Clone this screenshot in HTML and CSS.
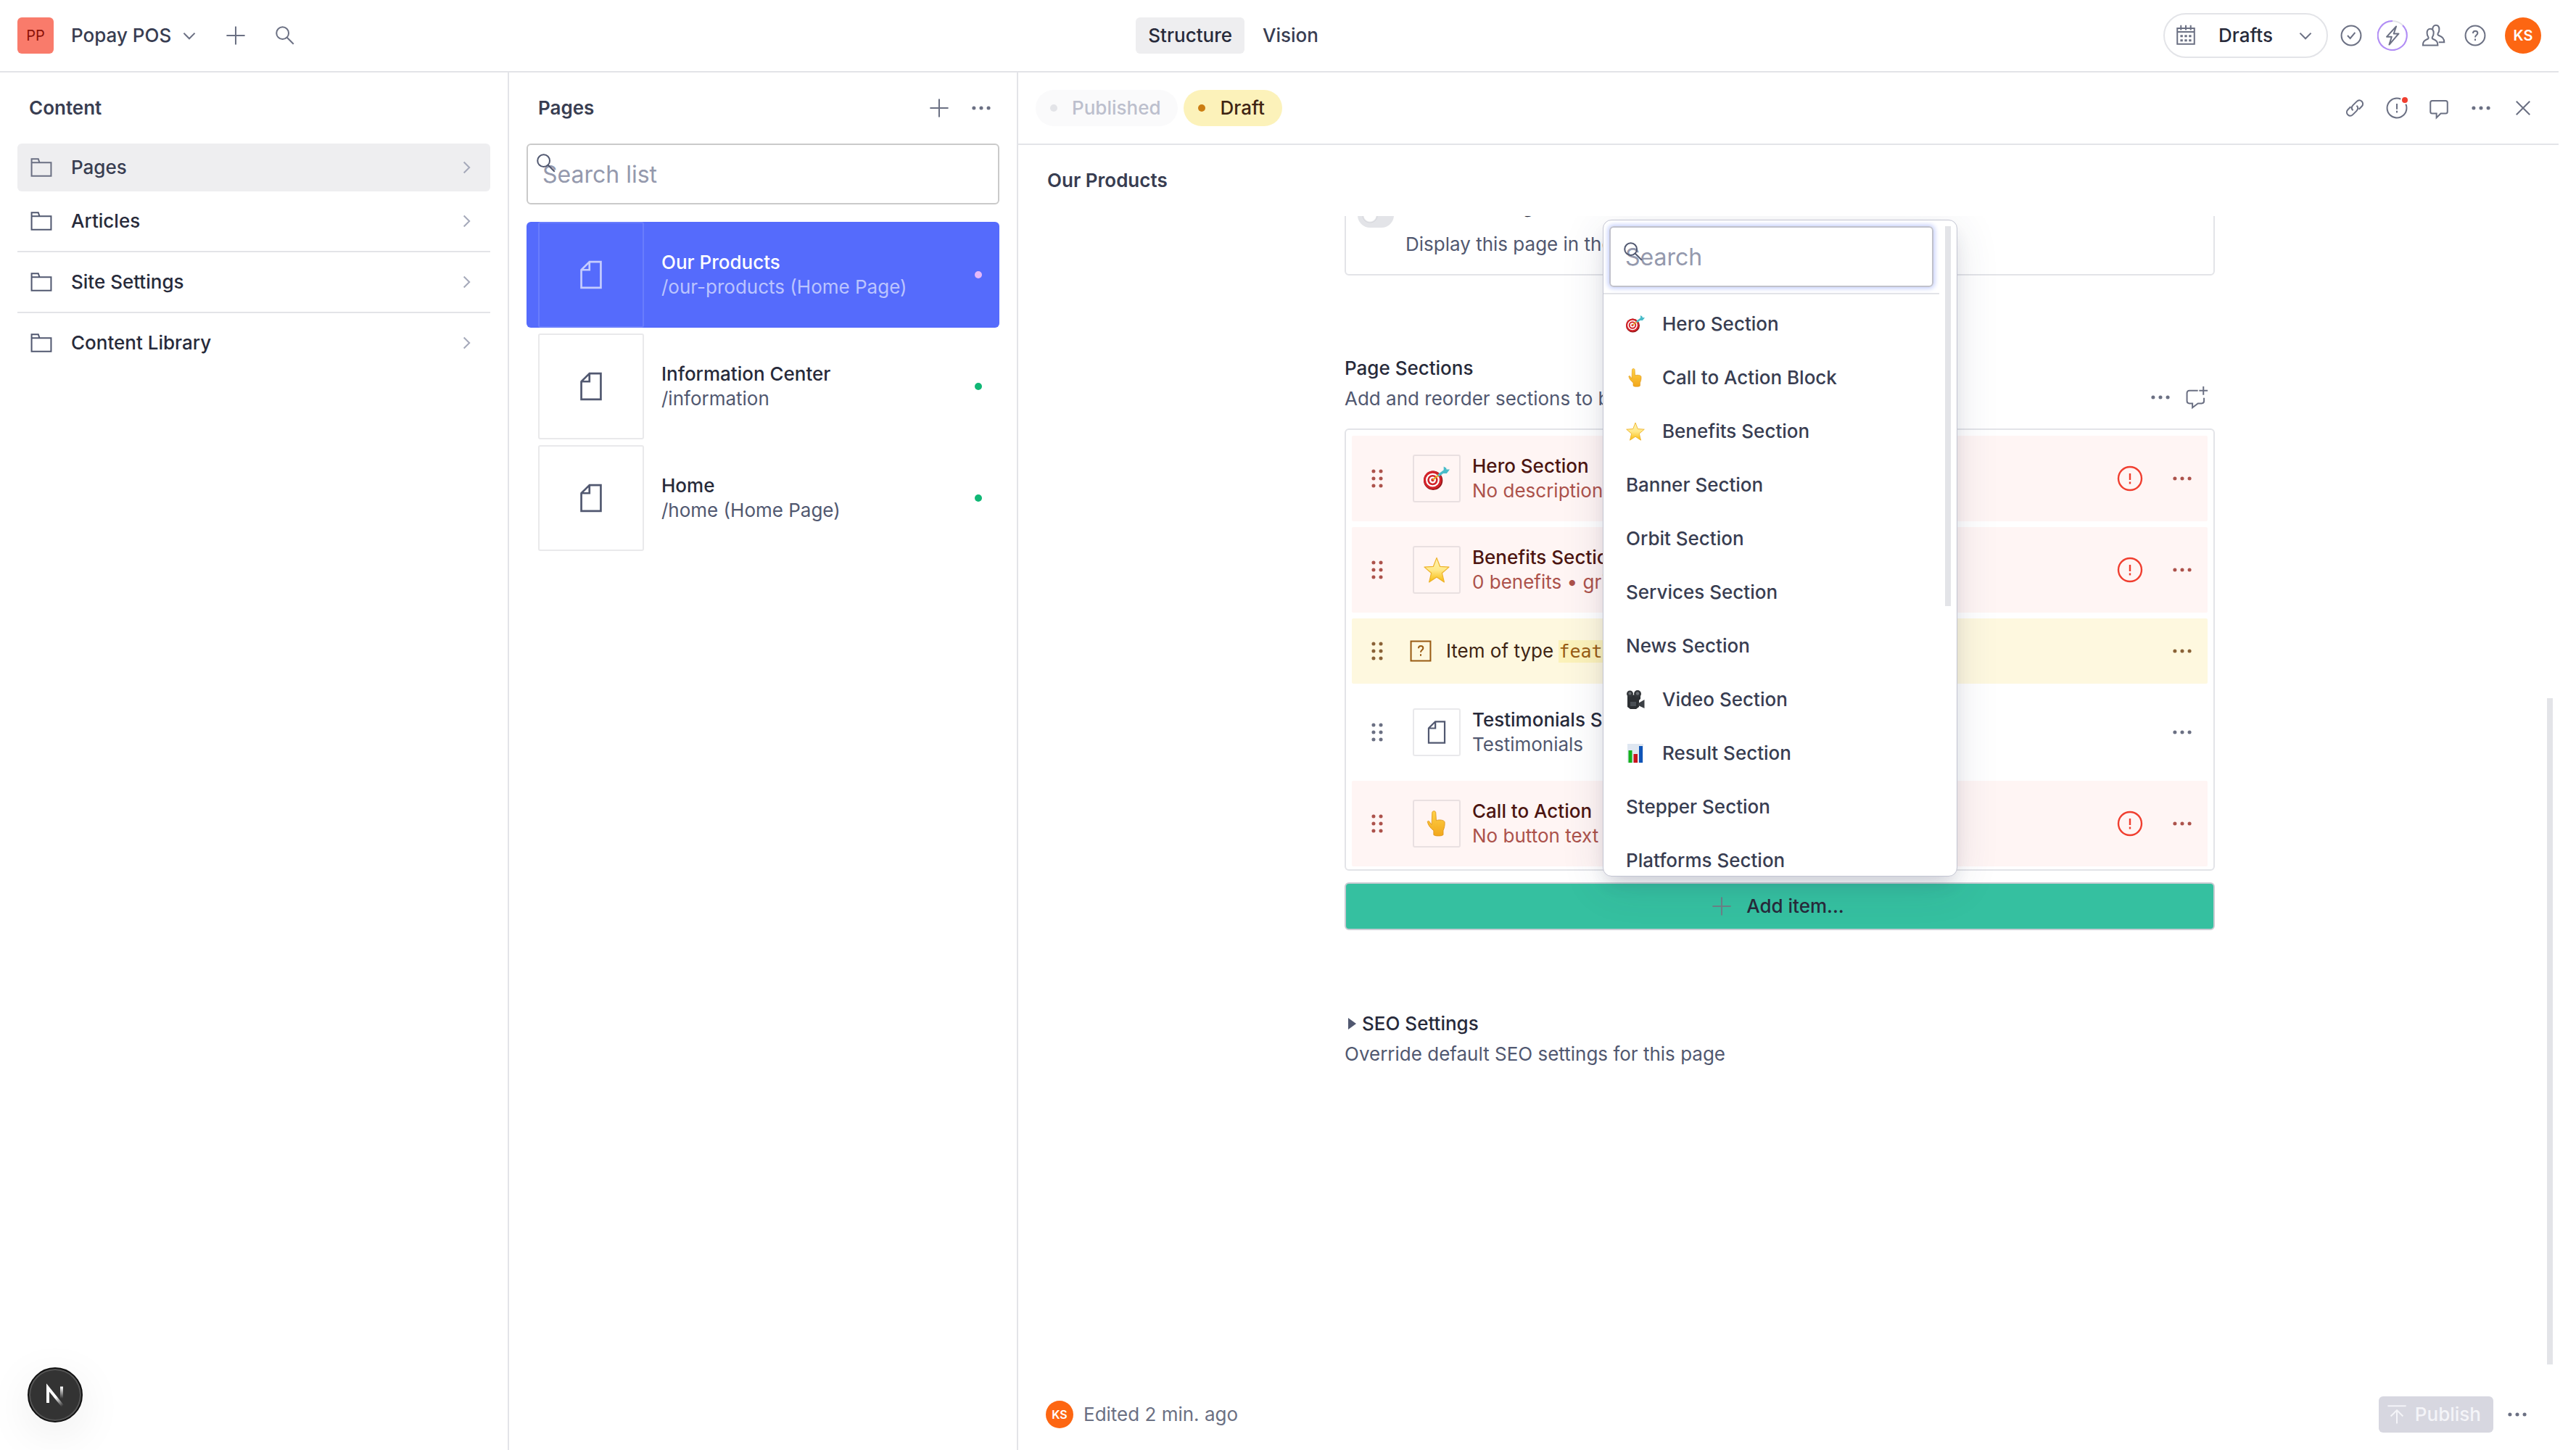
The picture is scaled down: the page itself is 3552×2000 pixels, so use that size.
FILE: index.html
```html
<!DOCTYPE html>
<html lang="en">
  <head>
    <meta charset="UTF-8" />
    <meta name="viewport" content="width=device-width, initial-scale=1.0" />
    <title>Our Products | Popay POS</title>
    <link rel="stylesheet" href="styles.css">
  </head>
  <body>
    <!-- icon sprite -->
    <svg class="sprite" aria-hidden="true">
      <symbol id="i-plus" viewBox="0 0 25 25"><path d="M12.5 5v15M5 12.5h15" /></symbol>
      <symbol id="i-search" viewBox="0 0 25 25"><circle cx="10.5" cy="10.5" r="5" /><path d="M14 14l5.5 5.5" /></symbol>
      <symbol id="i-down" viewBox="0 0 25 25"><path d="M17 10.5L12.5 15 8 10.5" /></symbol>
      <symbol id="i-right" viewBox="0 0 25 25"><path d="M10.5 8l4.5 4.5-4.5 4.5" /></symbol>
      <symbol id="i-dots" viewBox="0 0 25 25"><g fill="currentColor" stroke="none"><circle cx="6.5" cy="12.5" r="1.5" /><circle cx="12.5" cy="12.5" r="1.5" /><circle cx="18.5" cy="12.5" r="1.5" /></g></symbol>
      <symbol id="i-drag" viewBox="0 0 25 25"><g fill="currentColor" stroke="none"><circle cx="9.5" cy="6.5" r="1.5" /><circle cx="15.5" cy="6.5" r="1.5" /><circle cx="9.5" cy="12.5" r="1.5" /><circle cx="15.5" cy="12.5" r="1.5" /><circle cx="9.5" cy="18.5" r="1.5" /><circle cx="15.5" cy="18.5" r="1.5" /></g></symbol>
      <symbol id="i-folder" viewBox="0 0 25 25"><path d="M4.5 8.5V5.5h5.5l1 3M4.5 8.5h16v11h-16z" /></symbol>
      <symbol id="i-doc" viewBox="0 0 25 25"><path d="M11.5 4.5v5h-5M11.5 4.5l-5 5v11h12v-16z" /></symbol>
      <symbol id="i-calendar" viewBox="0 0 25 25"><path d="M5.5 6.5h14v13h-14zM5.5 9.5h14M8.5 4v4M12.5 4v4M16.5 4v4" /><path d="M8 13h2M11.5 13h2M15 13h2M8 16.5h2M11.5 16.5h2M15 16.5h2" stroke-width="1.8" /></symbol>
      <symbol id="i-check" viewBox="0 0 25 25"><circle cx="12.5" cy="12.5" r="8" /><path d="M9.5 12.5l2.2 2.3 4-4.8" /></symbol>
      <symbol id="i-bolt" viewBox="0 0 25 25"><path d="M15.5 5L7.8 13.5h4L9.8 20l7.7-9h-4z" stroke-linejoin="round" /></symbol>
      <symbol id="i-users" viewBox="0 0 25 25"><path d="M3.5 20.5c0-3 .8-3.800 4.200-5.300.5-.3.5-1 .2-1.500-.7-1-1-2-1-3.300 0-2.300 1-3.400 2.700-3.400s2.700 1.100 2.700 3.400c0 1.300-.3 2.300-1 3.300-.3.500-.3 1.200.2 1.500 3.400 1.500 4.200 2.300 4.200 5.300z" /><path d="M11.500 7.300c0-2 1.200-3.300 2.700-3.300 1.700 0 2.700 1.100 2.700 3.400 0 1.300-.3 2.300-1 3.300-.3.500-.3 1.200.2 1.500 3.400 1.500 4.900 2.800 4.900 5.800h-4.500" /></symbol>
      <symbol id="i-help" viewBox="0 0 25 25"><circle cx="12.5" cy="12.5" r="8" /><path d="M10.7 10.7c0-2.700 3.800-2.500 3.800-.2 0 1.500-2 1.600-2 3.500M12.5 15.200v1.500" /></symbol>
      <symbol id="i-alert" viewBox="0 0 25 25"><circle cx="12.5" cy="12.5" r="8" /><path d="M12.5 9v4.500M12.5 14.700v1.600" /></symbol>
      <symbol id="i-link" viewBox="0 0 25 25"><path d="M11 14.5c-1.300-1.300-1.300-3 0-4.300l3-3c1.300-1.300 3-1.300 4.200-.2 1.200 1.200 1.200 3 0 4.200l-2.300 2.300M14 10.500c1.300 1.300 1.300 3 0 4.300l-3 3c-1.300 1.300-3 1.300-4.200.2-1.200-1.200-1.200-3 0-4.200l2.300-2.300" /></symbol>
      <symbol id="i-comment" viewBox="0 0 25 25"><path d="M7 6.500h11c1 0 1.500.5 1.500 1.500v7.500c0 1-.5 1.500-1.500 1.500h-4l-3.500 3.500V17H7c-1 0-1.500-.5-1.500-1.500V8c0-1 .5-1.500 1.500-1.500z" /></symbol>
      <symbol id="i-comment-add" viewBox="0 0 25 25"><path d="M13.500 7h-7c-1.300 0-2 .7-2 2v6.500c0 1.300.7 2 2 2h2.500V21l4.500-3.500h3c1.300 0 2-.7 2-2V13M18 3.500v7M14.500 7h7" /></symbol>
      <symbol id="i-close" viewBox="0 0 25 25"><path d="M18 7L7 18M7 7l11 11" /></symbol>
      <symbol id="i-unknown" viewBox="0 0 25 25"><path d="M4.500 4.500h16v16h-16z" /><path d="M10.700 10.300c0-2.700 3.800-2.500 3.800-.2 0 1.500-2 1.600-2 3.500M12.500 15v1.500" /></symbol>
      <symbol id="i-publish" viewBox="0 0 25 25"><path d="M5 5.500h15M12.500 20V9M7.500 14l5-5 5 5" /></symbol>

      <linearGradient id="starFill" x1="0" y1="0" x2="0" y2="1"><stop offset="0" stop-color="#fff3b0" /><stop offset=".5" stop-color="#ffe98a" /><stop offset="1" stop-color="#f9bb0a" /></linearGradient>
      <linearGradient id="handFill" x1="0" y1="0" x2="0" y2="1"><stop offset="0" stop-color="#ffd247" /><stop offset="1" stop-color="#f2a71c" /></linearGradient>
      <symbol id="e-target" viewBox="0 0 26 26">
        <g stroke="none">
          <circle cx="9.500" cy="15" r="9.500" fill="#8e1417" /><circle cx="9" cy="14.500" r="9" fill="#d3232a" /><circle cx="9" cy="14.500" r="6.800" fill="#fff" /><circle cx="9" cy="14.500" r="5.200" fill="#d3232a" /><circle cx="9" cy="14.500" r="3.300" fill="#fff" /><circle cx="9" cy="14.500" r="1.600" fill="#d3232a" />
          <path d="M9 14.500l6-5" stroke="#e2a51c" stroke-width="1.500" />
          <path d="M14 9l6-4.500V1l2.500 1.500L22.800 4H26l-3 4h-3.500L15.500 11z" fill="#49bcc9" />
        </g>
      </symbol>
      <symbol id="e-hand" viewBox="0 0 26 26"><path d="M8.500 2c0-2 3.600-2 3.600 0L12.600 10c2-1.200 8-.8 8.400 1.500.3 3.500-.5 6-1.500 8.500v4c0 1.700-9.500 1.700-9.500 0v-4C7 17.500 4.500 15 3.800 11c.8-1.200 2-.5 2.600 1l1.600 2z" fill="url(#handFill)" stroke="#dd9418" stroke-width=".6" /></symbol>
      <symbol id="e-star" viewBox="0 0 26 26"><path d="M13 1l3.300 8.600 9 .6-7 6 2.200 9-7.500-5-7.500 5 2.200-9-7-6 9-.6z" fill="url(#starFill)" stroke="#eeb32c" stroke-width=".9" stroke-linejoin="round" /></symbol>
      <symbol id="e-camera" viewBox="0 0 26 26">
        <g stroke="none">
          <path d="M2 7l18-1v6l-2 2v9l-4 3H6l-4-3z" fill="#2c2f33" />
          <circle cx="5.500" cy="5" r="4.500" fill="#33363a" /><circle cx="16" cy="5" r="5" fill="#33363a" /><circle cx="5.500" cy="4.500" r="2" fill="#6c7075" /><circle cx="16" cy="4.500" r="2.200" fill="#6c7075" />
          <path d="M17 18l8.500-5v12L17 21z" fill="#3b3f44" /><path d="M6 16h8v6H6z" fill="#4a4f55" />
        </g>
      </symbol>
      <symbol id="e-chart" viewBox="0 0 26 26"><g stroke="none"><path d="M2 0h22v26H2z" fill="#dfe7f1" /><path d="M3.500 9h5v17h-5z" fill="#13b21b" /><path d="M10.500 14h5.500v12h-5.500z" fill="#c9131b" /><path d="M18 3h5v23h-5z" fill="#0f55b8" /></g></symbol>
    </svg>

    <header class="navbar">
      <div class="nav-left">
        <span class="logo">PP</span>
        <button class="workspace">Popay POS<svg class="icon"><use href="#i-down" /></svg></button>
        <button class="icon-btn" aria-label="Create"><svg class="icon"><use href="#i-plus" /></svg></button>
        <button class="icon-btn" aria-label="Search"><svg class="icon"><use href="#i-search" /></svg></button>
      </div>
      <nav class="tools">
        <a href="#structure" class="tool active">Structure</a>
        <a href="#vision" class="tool">Vision</a>
      </nav>
      <div class="nav-right">
        <button class="perspective">
          <svg class="icon"><use href="#i-calendar" /></svg>
          <span>Drafts</span>
          <svg class="icon"><use href="#i-down" /></svg>
        </button>
        <button class="icon-btn" aria-label="Tasks"><svg class="icon"><use href="#i-check" /></svg></button>
        <button class="icon-btn" aria-label="Trial">
          <svg class="icon ring" viewBox="0 0 42 42"><circle cx="21" cy="21" r="20" stroke="#e3e4e8" stroke-width="2" /><path d="M35 7A20 20 0 1 1 21 1" stroke="#b18cf7" stroke-width="2" /></svg>
          <svg class="icon"><use href="#i-bolt" /></svg>
        </button>
        <button class="icon-btn" aria-label="Members"><svg class="icon"><use href="#i-users" /></svg></button>
        <button class="icon-btn" aria-label="Help"><svg class="icon"><use href="#i-help" /></svg></button>
        <button class="avatar">KS</button>
      </div>
    </header>

    <main class="panes">
      <section class="pane">
        <div class="pane-head"><h2>Content</h2></div>
        <nav class="menu">
          <a href="#pages" class="menu-item active"><svg class="icon"><use href="#i-folder" /></svg><span>Pages</span><svg class="icon arrow"><use href="#i-right" /></svg></a>
          <a href="#articles" class="menu-item"><svg class="icon"><use href="#i-folder" /></svg><span>Articles</span><svg class="icon arrow"><use href="#i-right" /></svg></a>
          <hr />
          <a href="#settings" class="menu-item"><svg class="icon"><use href="#i-folder" /></svg><span>Site Settings</span><svg class="icon arrow"><use href="#i-right" /></svg></a>
          <hr />
          <a href="#library" class="menu-item"><svg class="icon"><use href="#i-folder" /></svg><span>Content Library</span><svg class="icon arrow"><use href="#i-right" /></svg></a>
        </nav>
      </section>

      <section class="pane">
        <div class="pane-head">
          <h2>Pages</h2>
          <button class="icon-btn" aria-label="Create page"><svg class="icon"><use href="#i-plus" /></svg></button>
          <button class="icon-btn" aria-label="Show menu"><svg class="icon"><use href="#i-dots" /></svg></button>
        </div>
        <div class="menu">
          <div class="search list-search">
            <svg class="icon"><use href="#i-search" /></svg>
            <input type="text" placeholder="Search list" aria-label="Search list" />
          </div>
          <a href="#our-products" class="doc active">
            <span class="thumb"><svg class="icon"><use href="#i-doc" /></svg></span>
            <span class="text"><b>Our Products</b><small>/our-products (Home Page)</small></span>
            <i class="dot"></i>
          </a>
          <a href="#information" class="doc">
            <span class="thumb"><svg class="icon"><use href="#i-doc" /></svg></span>
            <span class="text"><b>Information Center</b><small>/information</small></span>
            <i class="dot"></i>
          </a>
          <a href="#home" class="doc">
            <span class="thumb"><svg class="icon"><use href="#i-doc" /></svg></span>
            <span class="text"><b>Home</b><small>/home (Home Page)</small></span>
            <i class="dot"></i>
          </a>
        </div>
      </section>

      <section class="editor">
        <div class="editor-bar">
          <button class="pill" disabled><i class="dot"></i>Published</button>
          <button class="pill draft"><i class="dot"></i>Draft</button>
          <div class="actions">
            <button class="icon-btn" aria-label="Copy link"><svg class="icon"><use href="#i-link" /></svg></button>
            <button class="icon-btn" aria-label="Validation"><svg class="icon"><use href="#i-alert" /></svg><i class="badge"></i></button>
            <button class="icon-btn" aria-label="Comments"><svg class="icon"><use href="#i-comment" /></svg></button>
            <button class="icon-btn" aria-label="More"><svg class="icon"><use href="#i-dots" /></svg></button>
            <button class="icon-btn" aria-label="Close"><svg class="icon"><use href="#i-close" /></svg></button>
          </div>
        </div>
        <h1 class="doc-title">Our Products</h1>

        <div class="scroller">
          <div class="form">
            <div class="clip">
              <label class="switch-field">
                <input type="checkbox" class="switch" />
                <span class="text"><b>Show in Navigation</b><small>Display this page in the main navigation</small></span>
              </label>
            </div>

            <div class="field-head">
              <div class="text"><b>Page Sections</b><small>Add and reorder sections to build your page</small></div>
              <button class="icon-btn" aria-label="Field actions"><svg class="icon"><use href="#i-dots" /></svg></button>
              <button class="icon-btn" aria-label="Add comment"><svg class="icon"><use href="#i-comment-add" /></svg></button>
            </div>

            <div class="array">
              <div class="row error">
                <svg class="icon drag"><use href="#i-drag" /></svg>
                <span class="thumb small"><svg class="emoji"><use href="#e-target" /></svg></span>
                <span class="text"><b>Hero Section</b><small>No description</small></span>
                <svg class="icon warn"><use href="#i-alert" /></svg>
                <button class="icon-btn" aria-label="Item menu"><svg class="icon"><use href="#i-dots" /></svg></button>
              </div>
              <div class="row error">
                <svg class="icon drag"><use href="#i-drag" /></svg>
                <span class="thumb small"><svg class="emoji"><use href="#e-star" /></svg></span>
                <span class="text"><b>Benefits Section</b><small>0 benefits • grid</small></span>
                <svg class="icon warn"><use href="#i-alert" /></svg>
                <button class="icon-btn" aria-label="Item menu"><svg class="icon"><use href="#i-dots" /></svg></button>
              </div>
              <div class="row unknown">
                <svg class="icon drag"><use href="#i-drag" /></svg>
                <svg class="icon mark"><use href="#i-unknown" /></svg>
                <span class="text">Item of type <code>features</code></span>
                <button class="icon-btn" aria-label="Item menu"><svg class="icon"><use href="#i-dots" /></svg></button>
              </div>
              <div class="row">
                <svg class="icon drag"><use href="#i-drag" /></svg>
                <span class="thumb small"><svg class="icon"><use href="#i-doc" /></svg></span>
                <span class="text"><b>Testimonials Section</b><small>Testimonials</small></span>
                <button class="icon-btn" aria-label="Item menu"><svg class="icon"><use href="#i-dots" /></svg></button>
              </div>
              <div class="row error">
                <svg class="icon drag"><use href="#i-drag" /></svg>
                <span class="thumb small"><svg class="emoji"><use href="#e-hand" /></svg></span>
                <span class="text"><b>Call to Action</b><small>No button text</small></span>
                <svg class="icon warn"><use href="#i-alert" /></svg>
                <button class="icon-btn" aria-label="Item menu"><svg class="icon"><use href="#i-dots" /></svg></button>
              </div>
            </div>

            <div class="add">
              <button class="add-btn"><svg class="icon"><use href="#i-plus" /></svg>Add item...</button>
              <div class="popover">
                <div class="popover-body">
                  <div class="search popover-search">
                    <svg class="icon"><use href="#i-search" /></svg>
                    <input type="text" placeholder="Search" aria-label="Search types" />
                  </div>
                  <div class="options">
                    <button class="option"><svg class="emoji"><use href="#e-target" /></svg>Hero Section</button>
                    <button class="option"><svg class="emoji"><use href="#e-hand" /></svg>Call to Action Block</button>
                    <button class="option"><svg class="emoji"><use href="#e-star" /></svg>Benefits Section</button>
                    <button class="option">Banner Section</button>
                    <button class="option">Orbit Section</button>
                    <button class="option">Services Section</button>
                    <button class="option">News Section</button>
                    <button class="option"><svg class="emoji"><use href="#e-camera" /></svg>Video Section</button>
                    <button class="option"><svg class="emoji"><use href="#e-chart" /></svg>Result Section</button>
                    <button class="option">Stepper Section</button>
                    <button class="option">Platforms Section</button>
                  </div>
                </div>
                <div class="popover-thumb"></div>
              </div>
            </div>

            <details class="seo">
              <summary>SEO Settings</summary>
            </details>
            <p class="seo-text">Override default SEO settings for this page</p>
          </div>
          <div class="scroll-thumb"></div>
        </div>

        <footer class="status">
          <span class="avatar">KS</span>
          <span>Edited 2 min. ago</span>
          <button class="publish" disabled><svg class="icon"><use href="#i-publish" /></svg>Publish</button>
          <button class="icon-btn" aria-label="More actions"><svg class="icon"><use href="#i-dots" /></svg></button>
        </footer>
      </section>
    </main>

    <button class="dev-badge" aria-label="Open dev tools">
      <svg viewBox="0 0 40 40" fill="none" stroke-width="4">
        <linearGradient id="fade1" gradientUnits="userSpaceOnUse" x1="22" y1="22" x2="32" y2="34"><stop stop-color="#fff" /><stop offset="1" stop-color="#fff" stop-opacity="0" /></linearGradient>
        <linearGradient id="fade2" gradientUnits="userSpaceOnUse" x1="29" y1="9" x2="29" y2="25"><stop stop-color="#fff" /><stop offset="1" stop-color="#fff" stop-opacity="0" /></linearGradient>
        <path d="M10 31V10L31 36" stroke="url(#fade1)" /><path d="M29 8.5V25" stroke="url(#fade2)" />
      </svg>
    </button>
  </body>
</html>
```
FILE: styles.css
```css
* {
  box-sizing: border-box;
}
body {
  margin: 0;
  padding-right: 24px;
  height: 100vh;
  display: flex;
  flex-direction: column;
  overflow: hidden;
  background: #fff;
  color: #272a3a;
  font-family: Inter, "Liberation Sans", sans-serif;
  font-size: 26px;
  line-height: 34px;
}
button {
  border: none;
  padding: 0;
  background: none;
  font: inherit;
  font-weight: 500;
  color: inherit;
  cursor: pointer;
}
a {
  color: inherit;
  text-decoration: none;
}
h1,
h2 {
  margin: 0;
  font-size: 26px;
  font-weight: 600;
  color: #383d51;
}
b {
  font-weight: 500;
}
small {
  font-size: 26px;
  color: #515870;
}
.sprite {
  position: absolute;
  width: 0;
  height: 0;
}
.icon {
  width: 42px;
  height: 42px;
  flex: none;
  fill: none;
  stroke: currentColor;
  stroke-width: 1.2;
}
.emoji {
  width: 26px;
  height: 26px;
  flex: none;
}
.icon-btn {
  position: relative;
  display: flex;
  align-items: center;
  justify-content: center;
  flex: none;
  width: 50px;
  height: 50px;
  color: #6b7083;
}
.text {
  display: flex;
  flex-direction: column;
  flex: 1;
  min-width: 0;
  white-space: nowrap;
}
.dot {
  width: 10px;
  height: 10px;
  flex: none;
  border-radius: 50%;
}
.avatar {
  display: flex;
  align-items: center;
  justify-content: center;
  flex: none;
  width: 50px;
  height: 50px;
  border-radius: 50%;
  background: #fd6612;
  color: #fff;
  font-size: 20px;
  font-weight: 600;
}

/* top bar */
.navbar {
  display: flex;
  align-items: center;
  justify-content: space-between;
  height: 100px;
  flex: none;
  padding: 0 24px;
  border-bottom: 2px solid #e3e4e8;
}
.nav-left,
.nav-right,
.tools {
  display: flex;
  align-items: center;
}
.nav-left {
  gap: 18px;
}
.logo {
  width: 50px;
  height: 50px;
  border-radius: 6px;
  background: #f97b6b;
  color: #8b1208;
  font-size: 20px;
  line-height: 50px;
  text-align: center;
}
.workspace {
  display: flex;
  align-items: center;
  gap: 4px;
  padding-left: 6px;
  color: #383d51;
}
.workspace .icon,
.nav-left .icon-btn {
  color: #6b7083;
}
.tools {
  gap: 8px;
}
.tool {
  padding: 8px 17px;
  border-radius: 6px;
  font-weight: 500;
  color: #383d51;
}
.tool.active {
  background: #eeeef0;
  color: #272a3a;
}
.nav-right {
  gap: 7px;
}
.nav-right .avatar {
  margin-left: 9px;
}
.perspective {
  display: flex;
  align-items: center;
  height: 62px;
  padding: 0 8px;
  border: 2px solid #e3e4e8;
  border-radius: 31px;
}
.perspective span {
  padding: 0 24px;
}
.perspective .icon {
  color: #6b7083;
}
.ring {
  position: absolute;
  top: 4px;
  left: 4px;
}

/* panes */
.panes {
  display: grid;
  grid-template-columns: 702px 702px 1fr;
  flex: 1;
  min-height: 0;
}
.pane {
  border-right: 2px solid #e3e4e8;
}
.pane-head {
  display: flex;
  align-items: center;
  gap: 8px;
  height: 98px;
  padding: 0 24px 0 40px;
}
.pane-head h2 {
  flex: 1;
}
.menu {
  display: flex;
  flex-direction: column;
  gap: 8px;
  padding: 0 24px;
}
.menu hr {
  width: 100%;
  margin: 0;
  border: none;
  border-top: 2px solid #e3e4e8;
}
.menu-item {
  display: flex;
  align-items: center;
  gap: 20px;
  height: 66px;
  padding: 0 12px;
  border-radius: 6px;
  font-weight: 500;
}
.menu-item span {
  flex: 1;
}
.menu-item .icon {
  color: #515870;
}
.menu-item.active {
  background: #eeeef0;
  color: #383d51;
}
.menu-item.active .icon {
  color: #6b7083;
}
.menu-item .icon.arrow {
  color: #a5a9ba;
}
.search {
  position: relative;
}
.search .icon {
  position: absolute;
  top: 6px;
  left: 6px;
  color: #515870;
}
.search input {
  display: block;
  width: 100%;
  height: 84px;
  padding: 0 20px;
  border: 2px solid #cacaca;
  border-radius: 6px;
  background: none;
  font: inherit;
  font-size: 32px;
  outline: none;
}
.search input::placeholder {
  color: #9499ad;
  opacity: 1;
}
.list-search {
  margin-bottom: 16px;
}
.doc {
  display: flex;
  align-items: center;
  gap: 24px;
  padding: 0 24px 0 16px;
  border-radius: 6px;
}
.thumb {
  display: flex;
  align-items: center;
  justify-content: center;
  flex: none;
  width: 146px;
  height: 146px;
  border: 2px solid rgba(40, 40, 60, 0.1);
  border-radius: 3px;
  color: #515870;
}
.thumb .icon {
  width: 56px;
  height: 56px;
}
.thumb.small {
  width: 66px;
  height: 66px;
}
.thumb.small .icon {
  width: 46px;
  height: 46px;
}
.thumb .emoji {
  width: 36px;
  height: 36px;
}
.doc .dot {
  background: #10b775;
}
.doc.active {
  background: #556bfc;
  color: #fff;
}
.doc.active .thumb {
  border-color: rgba(255, 255, 255, 0.12);
  color: #c5ccfe;
}
.doc.active small {
  color: #bbc4fe;
}
.doc.active .dot {
  background: #e5b8f8;
}

/* editor */
.editor {
  display: flex;
  flex-direction: column;
  min-width: 0;
  min-height: 0;
}
.editor-bar {
  display: flex;
  align-items: center;
  gap: 8px;
  height: 100px;
  flex: none;
  padding: 0 24px;
  border-bottom: 2px solid #e3e4e8;
}
.pill {
  display: flex;
  align-items: center;
  gap: 20px;
  height: 50px;
  padding: 0 24px 0 20px;
  border-radius: 25px;
  background: #fafafb;
  color: #bcbfcd;
}
.pill .dot {
  background: #e3e4e8;
}
.pill.draft {
  background: #fcf2ba;
  color: #3f2513;
}
.pill.draft .dot {
  background: #cb7d12;
}
.actions {
  display: flex;
  gap: 8px;
  margin-left: auto;
}
.badge {
  position: absolute;
  top: 8px;
  right: 8px;
  width: 12px;
  height: 12px;
  border: 2px solid #fff;
  border-radius: 50%;
  background: #f03e2f;
}
.doc-title {
  height: 98px;
  flex: none;
  padding-left: 40px;
  line-height: 98px;
}
.scroller {
  position: relative;
  flex: 1;
  min-height: 0;
  overflow: hidden;
  padding-right: 24px;
}
.form {
  width: 1200px;
  max-width: 100%;
  margin: 0 auto;
}
.clip {
  display: flex;
  flex-direction: column;
  justify-content: flex-end;
  height: 82px;
  overflow: hidden;
}
.switch-field {
  display: flex;
  gap: 16px;
  padding: 16px 16px 24px;
  border: 2px solid #e3e4e8;
  border-radius: 6px;
}
.switch-field .text {
  gap: 18px;
}
.switch {
  appearance: none;
  width: 50px;
  height: 34px;
  margin: 12px 0 0;
  border-radius: 17px;
  background: radial-gradient(circle at 17px 17px, #fff 8px, #d5d6db 10px, #e3e4e8 11px);
}
.field-head {
  display: flex;
  align-items: flex-end;
  margin-top: 111px;
  margin-bottom: 18px;
}
.field-head .text {
  gap: 8px;
  padding-bottom: 6px;
}
.array {
  display: flex;
  flex-direction: column;
  gap: 8px;
  padding: 8px 8px 4px;
  border: 2px solid #e3e4e8;
  border-radius: 6px;
}
.row {
  display: flex;
  align-items: center;
  height: 118px;
  padding: 0 10px 0 14px;
  border-radius: 2px;
}
.row .thumb {
  margin: 0 16px 0 28px;
}
.row .drag,
.row .icon-btn {
  color: #6b7083;
}
.row.error {
  background: #fff5f4;
  color: #4c1511;
}
.row.error small,
.row.error .drag,
.row.error .icon-btn {
  color: #ac524b;
}
.warn {
  width: 50px;
  height: 50px;
  margin-right: 22px;
  color: #f03e2f;
}
.row.unknown {
  height: 90px;
  background: #fef8df;
  color: #3f2513;
}
.row.unknown .drag,
.row.unknown .icon-btn {
  color: #8a6237;
}
.row.unknown .text {
  display: block;
}
.mark {
  margin: 0 14px 0 18px;
  color: #985b13;
}
code {
  padding: 1px 0;
  background: #fcf2ba;
  color: #985b13;
  font-family: "DejaVu Sans Mono", monospace;
  font-size: 25px;
}
.add {
  position: relative;
  margin-top: 16px;
}
.add-btn {
  display: flex;
  align-items: center;
  justify-content: center;
  gap: 13px;
  width: 100%;
  height: 66px;
  padding-right: 12px;
  border: 2px solid #c9ccd3;
  border-radius: 6px;
  background: #35c0a0;
}
.add-btn .icon {
  color: #6b8087;
}

/* type picker, opens above the add button */
.popover {
  position: absolute;
  bottom: calc(100% + 8px);
  left: calc(50% - 244px);
  display: flex;
  width: 489px;
  height: 906px;
  overflow: hidden;
  border: 1px solid #c3c5d2;
  border-radius: 12px;
  background: #fff;
  box-shadow: 0 14px 24px -8px rgba(50, 55, 90, 0.2), 0 12px 60px rgba(50, 55, 90, 0.12);
}
.popover-body {
  width: 464px;
}
.popover-search {
  padding: 8px;
  border-bottom: 2px solid #e3e4e8;
}
.popover-search .icon {
  top: 22px;
  left: 20px;
}
.popover-search input {
  border-color: #c0c1cb;
  box-shadow: 0 0 6px 2px #c5cffb;
}
.options {
  display: flex;
  flex-direction: column;
  gap: 8px;
  padding: 8px;
}
.option {
  display: flex;
  align-items: center;
  gap: 24px;
  height: 66px;
  flex: none;
  padding: 0 23px;
  color: #383d51;
}
.popover-thumb {
  width: 8px;
  height: 524px;
  margin: 8px;
  background: #e3e4e8;
}
.seo {
  margin-top: 112px;
  font-weight: 500;
}
.seo summary {
  display: flex;
  align-items: center;
  gap: 8px;
  padding-left: 5px;
}
.seo summary::before {
  content: "";
  border-left: 11px solid #515870;
  border-top: 8px solid transparent;
  border-bottom: 8px solid transparent;
}
.seo-text {
  margin: 8px 0 0;
  color: #515870;
}
.scroll-thumb {
  position: absolute;
  right: 8px;
  bottom: 0;
  width: 8px;
  height: 58%;
  background: #e3e4e8;
}
.status {
  display: flex;
  align-items: center;
  height: 118px;
  flex: none;
  padding: 20px 32px 0 38px;
  gap: 14px;
  color: #6b7083;
}
.status .avatar {
  width: 38px;
  height: 38px;
  font-size: 16px;
}
.publish {
  display: flex;
  align-items: center;
  gap: 4px;
  height: 50px;
  margin-left: auto;
  padding: 0 17px 0 4px;
  border-radius: 6px;
  background: #d7d7e0;
  color: #f4f4f8;
}
.status .icon-btn {
  margin-left: -6px;
}
.dev-badge {
  position: fixed;
  bottom: 38px;
  left: 38px;
  display: flex;
  align-items: center;
  justify-content: center;
  width: 76px;
  height: 76px;
  border: 2px solid #111;
  border-radius: 50%;
  background: #333;
  box-shadow: inset 0 0 0 2px #555, 0 16px 64px rgba(0, 0, 0, 0.08);
}
.dev-badge svg {
  width: 40px;
  height: 40px;
}
```
